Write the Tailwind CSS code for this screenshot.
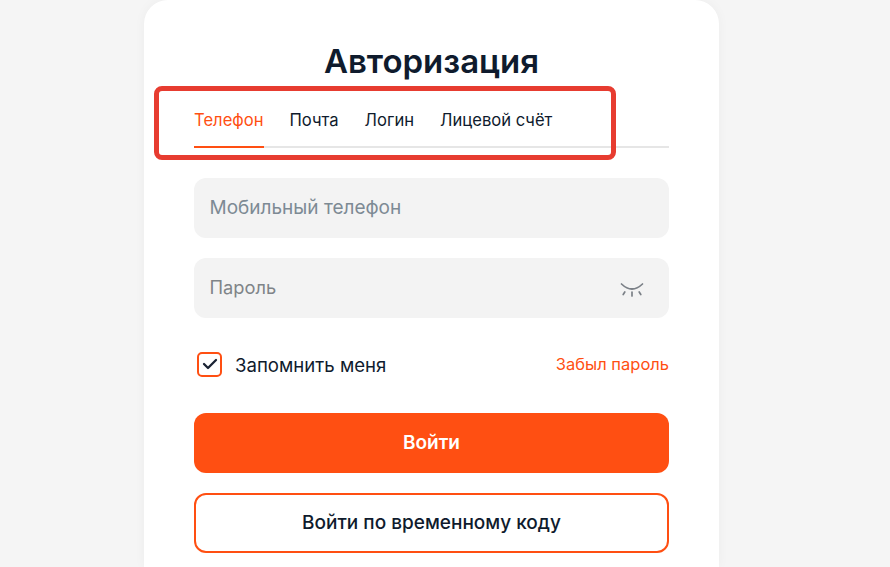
<!DOCTYPE html>
<html lang="ru">
    <head>
        <meta charset="UTF-8">
        <title>Авторизация</title>
        <script src="https://cdn.jsdelivr.net/npm/@tailwindcss/browser@4"></script>
    </head>
    <body class="h-screen overflow-hidden bg-[#f5f5f5] font-['Inter',sans-serif] text-[#0f1b2d]">
        <div class="relative ml-[144px] w-[575px] h-[567px] bg-white rounded-t-[24px] shadow-[0_0_12px_rgba(0,0,0,0.04)] px-[50px] pt-[41px]">
            <h1 class="text-[33px] leading-[40px] font-semibold text-center">Авторизация</h1>

            <!-- вкладки -->
            <div class="mt-[20px] h-[47px] flex gap-[26px] border-b-2 border-[#e6e6e6] text-[16.6px] leading-[20px] font-normal">
                <div class="h-[47px] pt-[9px] text-[#ff4f12] border-b-2 border-[#ff4f12]">Телефон</div>
                <div class="pt-[9px]">Почта</div>
                <div class="pt-[9px]">Логин</div>
                <div class="pt-[9px]">Лицевой счёт</div>
            </div>

            <div class="mt-[30px] h-[60px] rounded-[12px] bg-[#f3f3f3] px-[15.5px] flex items-center text-[19px] text-[#7d8a94]">Мобильный телефон</div>
            <div class="mt-[20px] h-[60px] rounded-[12px] bg-[#f3f3f3] pl-[15.5px] pr-[25px] flex items-center justify-between text-[18.3px] text-[#7f8488]">
                <span>Пароль</span>
                <svg class="w-[24px] h-[20px]" viewBox="0 0 24 20" fill="none" stroke="#7b8087" stroke-width="1.7" stroke-linecap="round">
                    <path d="M1.500 6Q12 16 22.500 6" />
                    <path d="M12 14v4M4.800 14l-1.600 2.500M19.200 14l1.600 2.500" />
                </svg>
            </div>

            <div class="mt-[34px] h-[24px] flex items-center justify-between">
                <div class="flex items-center gap-[13px] pl-[3px]">
                    <div class="w-[25px] h-[25px] rounded-[5px] border-2 border-[#ff4f12] flex items-center justify-center">
                        <svg class="w-[16px] h-[12px]" viewBox="0 0 16 12" fill="none" stroke="#1a2233" stroke-width="2.300" stroke-linecap="round" stroke-linejoin="round"><path d="M2 6l4 4 8-8" /></svg>
                    </div>
                    <span class="text-[18.6px] leading-[26px] pt-[1px]">Запомнить меня</span>
                </div>
                <a href="#" class="text-[16.5px] text-[#ff4f12]">Забыл пароль</a>
            </div>

            <button class="mt-[37px] block w-full h-[60px] rounded-[12px] bg-[#ff4f12] text-white text-[19px] font-semibold">Войти</button>
            <button class="mt-[20px] block w-full h-[60px] rounded-[12px] border-2 border-[#ff4f12] bg-white text-[19px] font-medium">Войти по временному коду</button>

            <!-- красная рамка-пометка поверх вкладок -->
            <div class="absolute left-[10px] top-[86px] w-[462px] h-[74px] rounded-[8px] border-[5px] border-[#e73c30]"></div>
        </div>
    </body>
</html>
